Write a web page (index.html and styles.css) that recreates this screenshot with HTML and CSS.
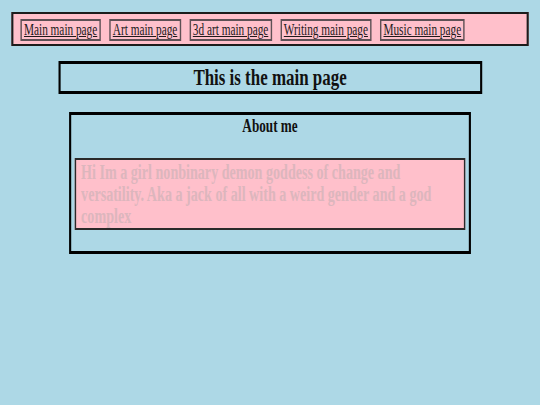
FILE: index.html
```html
<!DOCTYPE html>
<html>
<head>
<meta charset="utf-8">
<title>Main page</title>
<link rel="stylesheet" href="styles.css">
</head>
<body>
<div class="frame">
  <div class="page">
    <nav class="nav">
      <a class="nav-link" href="#">Main main page</a>
      <a class="nav-link" href="#">Art main page</a>
      <a class="nav-link" href="#">3d art main page</a>
      <a class="nav-link" href="#">Writing main page</a>
      <a class="nav-link" href="#">Music main page</a>
    </nav>
    <h2 class="title">This is the main page</h2>
    <section class="about">
      <h3 class="about-title">About me</h3>
      <p class="about-text">Hi Im a girl nonbinary demon goddess of change and versatility. Aka a jack of all with a weird gender and a god complex</p>
    </section>
  </div>
</div>
</body>
</html>
```
FILE: styles.css
```css
html, body {
  margin: 0;
  padding: 0;
  overflow: hidden;
  background: #add8e6;
}

body {
  font-family: "Liberation Serif", "Times New Roman", serif;
  color: #000;
}

.frame {
  width: 540px;
  height: 405px;
  overflow: hidden;
}

/* the reference is horizontally condensed; lay out at 766px and squeeze */
.page {
  width: 766px;
  box-sizing: border-box;
  padding: 12px 16px 0;
  transform: scaleX(0.705);
  transform-origin: 0 0;
}

.nav {
  display: flex;
  gap: 12px;
  align-items: center;
  background: #ffc0cb;
  border-style: solid;
  border-color: #1c1c1c;
  border-width: 2px 3px;
  padding: 5px 10px 3px;
}

.nav-link {
  display: block;
  font-size: 16px;
  line-height: 18px;
  color: #1e1a1b;
  text-decoration: underline;
  border: 2px solid #5e5055;
  padding: 0 3px;
}

.title {
  width: 601px;
  box-sizing: border-box;
  margin: 15px auto 0;
  border: 3px solid #000;
  font-size: 24px;
  font-weight: bold;
  line-height: 27px;
  text-align: center;
  color: #111;
}

.about {
  width: 570px;
  box-sizing: border-box;
  margin: 18px auto 0;
  border: 3px solid #000;
  padding: 0 5px;
}

.about-title {
  margin: 0 0 21px;
  font-size: 18.72px;
  line-height: 21.5px;
  text-align: center;
  color: #111;
}

.about-text {
  margin: 0 0 21px;
  background: #ffc0cb;
  border: 2px solid #2a2a2a;
  padding: 1px 30px 0 7px;
  font-size: 20px;
  font-weight: bold;
  line-height: 22.4px;
  color: #dcb6bd;
}
```
